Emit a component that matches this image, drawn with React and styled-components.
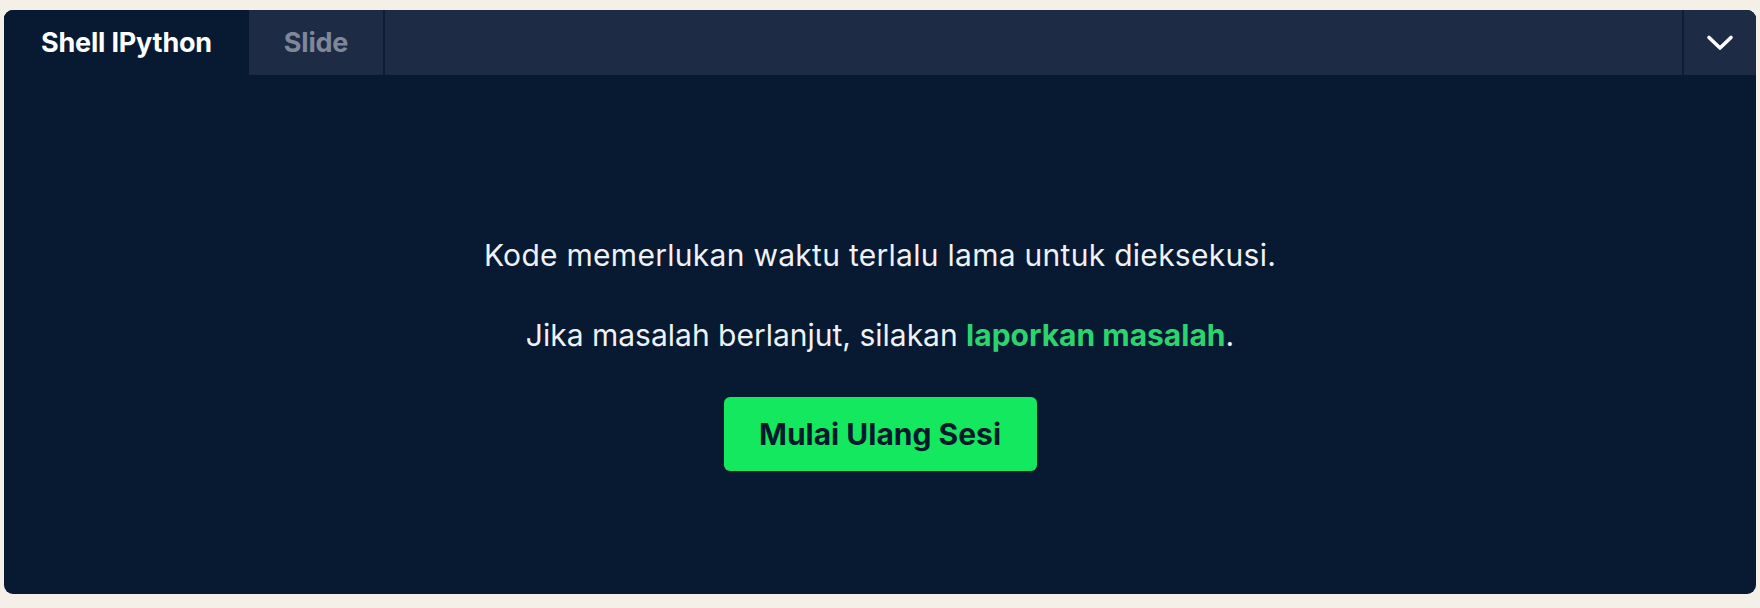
import React from "react";
import styled, { createGlobalStyle } from "styled-components";

const GlobalStyle = createGlobalStyle`
  html, body {
    margin: 0;
    padding: 0;
    background: #f4f0e8;
    font-family: Inter, "Noto Sans", sans-serif;
  }
`;

const Page = styled.div`
  padding: 10px 4px 14px 4px;
`;

const Panel = styled.div`
  height: 584px;
  background: #081a31;
  border-radius: 9px;
  overflow: hidden;
  display: flex;
  flex-direction: column;
`;

const TabBar = styled.div`
  height: 65px;
  display: flex;
  background: #1d2b44;
  flex-shrink: 0;
`;

const Tab = styled.button`
  border: none;
  margin: 0;
  padding: 0;
  width: ${(p) => p.$width}px;
  height: 100%;
  font-family: inherit;
  font-size: 27px;
  font-weight: 700;
  letter-spacing: -0.2px;
  background: ${(p) => (p.$active ? "#081a31" : "#1d2b44")};
  color: ${(p) => (p.$active ? "#ffffff" : "#7f8899")};
  border-right: ${(p) => (p.$active ? "none" : "2px solid #0f1d33")};
  cursor: pointer;
`;

const Spacer = styled.div`
  flex: 1;
`;

const ToggleButton = styled.button`
  width: 74px;
  height: 100%;
  border: none;
  border-left: 2px solid #0f1d33;
  background: #1d2b44;
  display: flex;
  align-items: center;
  justify-content: center;
  padding: 0;
  cursor: pointer;
`;

const Body = styled.div`
  flex: 1;
  display: flex;
  flex-direction: column;
  align-items: center;
  padding-top: 162px;
`;

const Message = styled.p`
  margin: 0 0 ${(p) => p.$gap}px 0;
  font-size: 30px;
  line-height: 36px;
  letter-spacing: ${(p) => p.$spacing || 0}px;
  color: #eef1f5;
`;

const ReportLink = styled.a`
  color: #2bd46f;
  font-weight: 700;
  text-decoration: none;
  cursor: pointer;
`;

const RestartButton = styled.button`
  width: 313px;
  height: 74px;
  border: none;
  border-radius: 6px;
  background: #14e85e;
  color: #05192d;
  font-family: inherit;
  font-size: 30px;
  font-weight: 700;
  cursor: pointer;
`;

const Chevron = () => (
  <svg width="28" height="18" viewBox="0 0 28 18" fill="none">
    <path
      d="M3 3.5 L14 14 L25 3.5"
      stroke="#ffffff"
      strokeWidth="3.6"
      strokeLinecap="round"
      strokeLinejoin="round"
    />
  </svg>
);

export default function App() {
  return (
    <Page>
      <GlobalStyle />
      <Panel>
        <TabBar>
          <Tab $active $width={245}>Shell IPython</Tab>
          <Tab $width={136}>Slide</Tab>
          <Spacer />
          <ToggleButton>
            <Chevron />
          </ToggleButton>
        </TabBar>
        <Body>
          <Message $gap={44} $spacing={0.28}>
            Kode memerlukan waktu terlalu lama untuk dieksekusi.
          </Message>
          <Message $gap={44}>
            Jika masalah berlanjut, silakan{" "}
            <ReportLink>laporkan masalah</ReportLink>.
          </Message>
          <RestartButton>Mulai Ulang Sesi</RestartButton>
        </Body>
      </Panel>
    </Page>
  );
}
